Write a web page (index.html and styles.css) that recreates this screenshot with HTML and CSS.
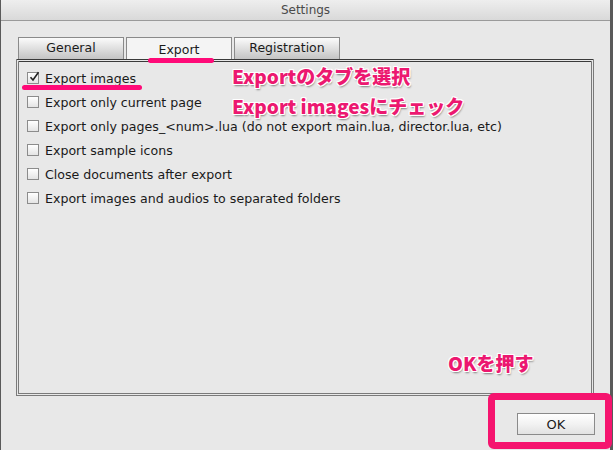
FILE: index.html
```html
<!DOCTYPE html>
<html lang="ja">
<head>
<meta charset="utf-8">
<title>Settings</title>
<link rel="stylesheet" href="styles.css">
</head>
<body>
<div class="window">
  <div class="titlebar">Settings</div>
  <div class="content">
    <div class="tabs">
      <div class="tab">General</div>
      <div class="tab active">Export</div>
      <div class="tab">Registration</div>
    </div>
    <div class="panel">
      <label class="row"><span class="box checked"><svg viewBox="0 0 12 12" width="12" height="12"><path d="M2.5 6.2 L5 9 L10.5 1.2" fill="none" stroke="#222" stroke-width="1.6"/></svg></span>Export images</label>
      <label class="row"><span class="box"></span>Export only current page</label>
      <label class="row"><span class="box"></span>Export only pages_&lt;num&gt;.lua (do not export main.lua, director.lua, etc)</label>
      <label class="row"><span class="box"></span>Export sample icons</label>
      <label class="row"><span class="box"></span>Close documents after export</label>
      <label class="row"><span class="box"></span>Export images and audios to separated folders</label>
    </div>
    <div class="footer">
      <button class="ok">OK</button>
    </div>
  </div>
  <div class="mark mark-tab"></div>
  <div class="mark mark-check"></div>
  <div class="note note-1">Exportのタブを選択</div>
  <div class="note note-2">Export imagesにチェック</div>
  <div class="note note-3">OKを押す</div>
  <div class="highlight"></div>
</div>
</body>
</html>
```
FILE: styles.css
```css
* { box-sizing: border-box; }
html, body { margin: 0; padding: 0; }
body {
  width: 613px;
  height: 450px;
  overflow: hidden;
  background: #e8e8e8;
  font-family: "DejaVu Sans", "Liberation Sans", sans-serif;
  color: #1a1a1a;
}
.window {
  position: relative;
  width: 613px;
  height: 450px;
  border-left: 1px solid #5a5a5a;
  border-right: 3px solid #5a5a5a;
  background: #e8e8e8;
}
.titlebar {
  height: 21px;
  line-height: 20px;
  text-align: center;
  font-size: 12px;
  color: #4a4a4a;
  background: linear-gradient(#eeeeee, #d9d9d9);
  border-bottom: 1px solid #9a9a9a;
}
.content {
  padding: 16px 15px 0 15px;
}
.tabs {
  display: flex;
  gap: 2px;
  padding-left: 2px;
}
.tab {
  width: 106px;
  height: 22px;
  line-height: 20px;
  text-align: center;
  font-size: 12.5px;
  color: #1a1a1a;
  border: 1px solid #8a8a8a;
  border-bottom: none;
  background: linear-gradient(#fbfbfb, #e2e2e2 45%, #c4c4c4);
}
.tab.active {
  background: #f4f4f4;
  line-height: 24px;
}
.panel {
  width: 578px;
  height: 337px;
  border: 3px double #7a7a7a;
  border-top-color: #3a3a3a;
  padding: 9px 0 0 8px;
  display: flex;
  flex-direction: column;
  gap: 10px;
}
.row {
  display: flex;
  align-items: center;
  gap: 6px;
  height: 14px;
  font-size: 12.6px;
  color: #1a1a1a;
  white-space: nowrap;
}
.box {
  width: 12px;
  height: 12px;
  flex: none;
  border: 1px solid #8c8c8c;
  background: linear-gradient(#ffffff, #e4e4e4);
  position: relative;
}
.box svg {
  position: absolute;
  left: 0;
  top: -2px;
}
.footer {
  display: flex;
  justify-content: flex-end;
  padding: 17px 0 0 0;
}
.ok {
  width: 78px;
  height: 22px;
  border: 1px solid #8a8a8a;
  background: linear-gradient(#ffffff, #f2f2f2 50%, #e2e2e2);
  font-family: "DejaVu Sans", "Liberation Sans", sans-serif;
  font-size: 13px;
  color: #1a1a1a;
  padding: 0;
}
.mark {
  position: absolute;
  height: 5px;
  border-radius: 3px;
  background: #ff0a78;
}
.mark-tab { left: 147px; top: 58px; width: 66px; }
.mark-check { left: 21px; top: 85px; width: 120px; }
.note {
  position: absolute;
  font-family: "Noto Sans CJK JP", "Noto Sans", sans-serif;
  font-weight: 900;
  font-size: 19px;
  line-height: 22px;
  color: #ec1870;
  white-space: nowrap;
  text-shadow:
    -1px -1px 0 #fff, 1px -1px 0 #fff, -1px 1px 0 #fff, 1px 1px 0 #fff,
    0 -1px 0 #fff, 0 1px 0 #fff, -1px 0 0 #fff, 1px 0 0 #fff,
    1px 2px 2px rgba(0,0,0,0.45);
}
.note-1 { left: 231px; top: 65px; }
.note-2 { left: 231px; top: 95px; }
.note-3 { left: 447px; top: 352px; }
.highlight {
  position: absolute;
  left: 487px;
  top: 393px;
  width: 124px;
  height: 56px;
  border: 7px solid #f5146e;
  border-radius: 6px;
}
```
